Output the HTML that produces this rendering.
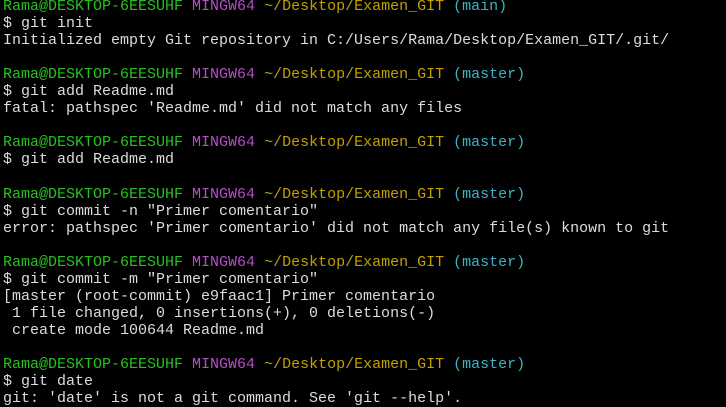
<!DOCTYPE html>
<html><head><style>
html,body{margin:0;padding:0;background:#000;width:726px;height:407px;overflow:hidden}
pre{margin:0;position:absolute;left:3px;top:-2px;font-family:"Liberation Mono",monospace;font-size:15px;line-height:17.05px;color:#dcdcdc;white-space:pre}
.g{color:#26c11f}.m{color:#b54ec8}.y{color:#c2a000}.c{color:#3ab4c4}
</style></head><body><pre><span class="g">Rama@DESKTOP-6EESUHF</span> <span class="m">MINGW64</span> <span class="y">~/Desktop/Examen_GIT</span> <span class="c">(main)</span>
$ git init
Initialized empty Git repository in C:/Users/Rama/Desktop/Examen_GIT/.git/

<span class="g">Rama@DESKTOP-6EESUHF</span> <span class="m">MINGW64</span> <span class="y">~/Desktop/Examen_GIT</span> <span class="c">(master)</span>
$ git add Readme.md
fatal: pathspec 'Readme.md' did not match any files

<span class="g">Rama@DESKTOP-6EESUHF</span> <span class="m">MINGW64</span> <span class="y">~/Desktop/Examen_GIT</span> <span class="c">(master)</span>
$ git add Readme.md

<span class="g">Rama@DESKTOP-6EESUHF</span> <span class="m">MINGW64</span> <span class="y">~/Desktop/Examen_GIT</span> <span class="c">(master)</span>
$ git commit -n "Primer comentario"
error: pathspec 'Primer comentario' did not match any file(s) known to git

<span class="g">Rama@DESKTOP-6EESUHF</span> <span class="m">MINGW64</span> <span class="y">~/Desktop/Examen_GIT</span> <span class="c">(master)</span>
$ git commit -m "Primer comentario"
[master (root-commit) e9faac1] Primer comentario
 1 file changed, 0 insertions(+), 0 deletions(-)
 create mode 100644 Readme.md

<span class="g">Rama@DESKTOP-6EESUHF</span> <span class="m">MINGW64</span> <span class="y">~/Desktop/Examen_GIT</span> <span class="c">(master)</span>
$ git date
git: 'date' is not a git command. See 'git --help'.
</pre></body></html>
